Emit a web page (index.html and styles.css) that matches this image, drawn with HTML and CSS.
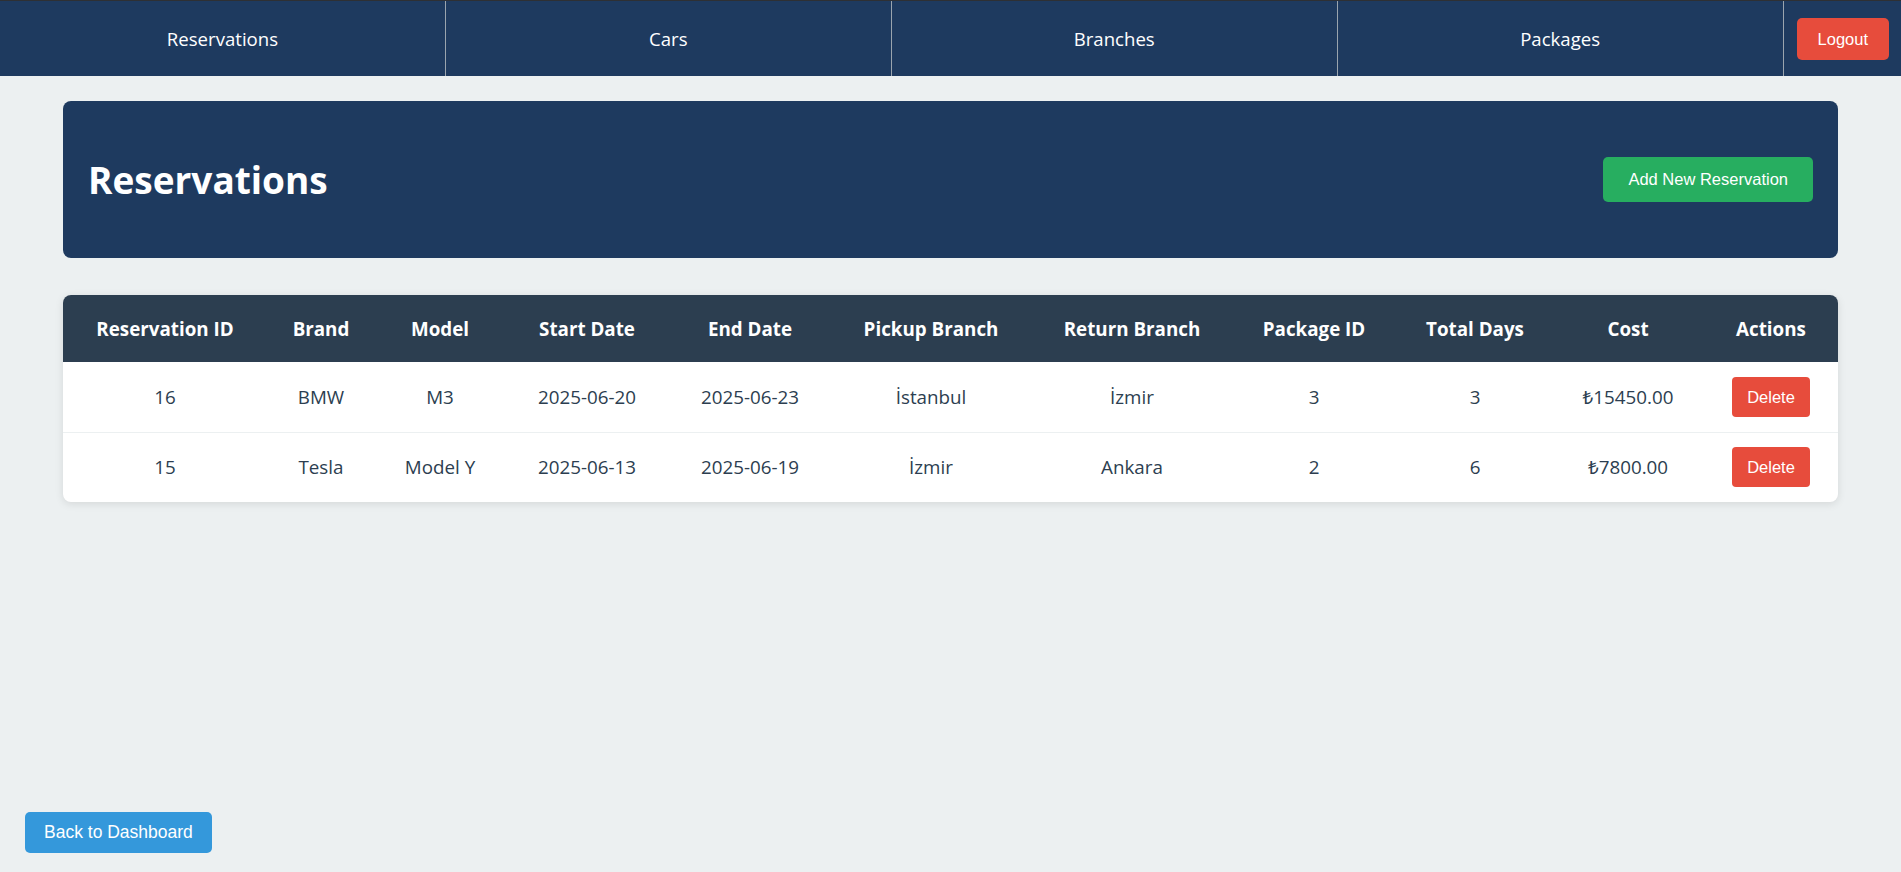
FILE: index.html
```html
<!DOCTYPE html>
<html lang="en">
<head>
<meta charset="utf-8">
<title>Reservations</title>
<link rel="stylesheet" href="styles.css">
</head>
<body>
<nav class="topnav">
  <a class="nav-link" href="#">Reservations</a>
  <a class="nav-link" href="#">Cars</a>
  <a class="nav-link" href="#">Branches</a>
  <a class="nav-link" href="#">Packages</a>
  <div class="nav-logout"><button class="btn btn-red btn-logout">Logout</button></div>
</nav>
<main class="container">
  <section class="page-header">
    <h1 class="page-title">Reservations</h1>
    <button class="btn btn-green btn-add">Add New Reservation</button>
  </section>
  <div class="table-card">
    <table class="data-table">
      <colgroup>
        <col class="c1"><col class="c2"><col class="c3"><col class="c4"><col class="c5"><col class="c6"><col class="c7"><col class="c8"><col class="c9"><col class="c10"><col class="c11">
      </colgroup>
      <thead>
        <tr>
          <th>Reservation ID</th><th>Brand</th><th>Model</th><th>Start Date</th><th>End Date</th><th>Pickup Branch</th><th>Return Branch</th><th>Package ID</th><th>Total Days</th><th>Cost</th><th>Actions</th>
        </tr>
      </thead>
      <tbody>
        <tr>
          <td>16</td><td>BMW</td><td>M3</td><td>2025-06-20</td><td>2025-06-23</td><td>İstanbul</td><td>İzmir</td><td>3</td><td>3</td><td>₺15450.00</td><td><button class="btn btn-red btn-delete">Delete</button></td>
        </tr>
        <tr>
          <td>15</td><td>Tesla</td><td>Model Y</td><td>2025-06-13</td><td>2025-06-19</td><td>İzmir</td><td>Ankara</td><td>2</td><td>6</td><td>₺7800.00</td><td><button class="btn btn-red btn-delete">Delete</button></td>
        </tr>
      </tbody>
    </table>
  </div>
</main>
<a class="btn btn-blue btn-back" href="#">Back to Dashboard</a>
</body>
</html>
```
FILE: styles.css
```css
* { box-sizing: border-box; }
html, body { height: 100%; }
body {
  margin: 0;
  background: #ecf0f1;
  font-family: "Segoe UI", "Open Sans", "Noto Sans", sans-serif;
  color: #2c3e50;
}
.topnav {
  display: flex;
  height: 76px;
  background: #1e3a5f;
  border-top: 1px solid #2e3034;
}
.nav-link {
  flex: 1;
  display: flex;
  align-items: center;
  justify-content: center;
  color: #ffffff;
  text-decoration: none;
  font-size: 18.6px;
  border-right: 1px solid #9aa4ae;
}
.nav-logout {
  display: flex;
  align-items: center;
  padding: 0 12px 0 13px;
}
.btn {
  font-family: "Liberation Sans", Arial, sans-serif;
  color: #ffffff;
  border: none;
  border-radius: 5px;
  cursor: pointer;
  text-decoration: none;
  display: inline-block;
}
.btn-red { background: #e74c3c; }
.btn-green { background: #27ae60; }
.btn-blue { background: #3498db; }
.btn-logout {
  font-size: 16.5px;
  line-height: 20px;
  padding: 11px 21px;
}
.container {
  padding: 25px 63px 0;
}
.page-header {
  display: flex;
  align-items: center;
  justify-content: space-between;
  height: 157px;
  padding: 0 25px;
  background: #1e3a5f;
  border-radius: 8px;
  margin-bottom: 37px;
}
.page-title {
  margin: 0;
  color: #ffffff;
  font-size: 37px;
  font-weight: 700;
}
.btn-add {
  font-size: 16.5px;
  line-height: 21px;
  padding: 12px 25px;
}
.table-card {
  background: #ffffff;
  border-radius: 8px;
  overflow: hidden;
  box-shadow: 0 2px 8px rgba(0, 0, 0, 0.1);
}
.data-table {
  width: 100%;
  border-collapse: collapse;
  table-layout: fixed;
}
.c1 { width: 204px; }
.c2 { width: 108px; }
.c3 { width: 130px; }
.c4 { width: 164px; }
.c5 { width: 162px; }
.c6 { width: 200px; }
.c7 { width: 202px; }
.c8 { width: 162px; }
.c9 { width: 160px; }
.c10 { width: 146px; }
.c11 { width: 140px; }
.data-table th {
  background: #2c3e50;
  color: #ffffff;
  font-weight: 700;
  font-size: 18.8px;
  height: 67px;
  padding: 0 4px;
  text-align: center;
  white-space: nowrap;
}
.data-table td {
  height: 70px;
  padding: 0 4px;
  text-align: center;
  font-size: 18.8px;
  color: #2c3e50;
  border-bottom: 1px solid #ecf0f1;
  white-space: nowrap;
}
.data-table tbody tr:last-child td { border-bottom: none; }
.btn-delete {
  font-size: 16.5px;
  line-height: 20px;
  padding: 10px 15px;
  border-radius: 4px;
}
.btn-back {
  position: fixed;
  left: 25px;
  bottom: 19px;
  font-size: 17.5px;
  line-height: 21px;
  padding: 10px 19px;
}
```
